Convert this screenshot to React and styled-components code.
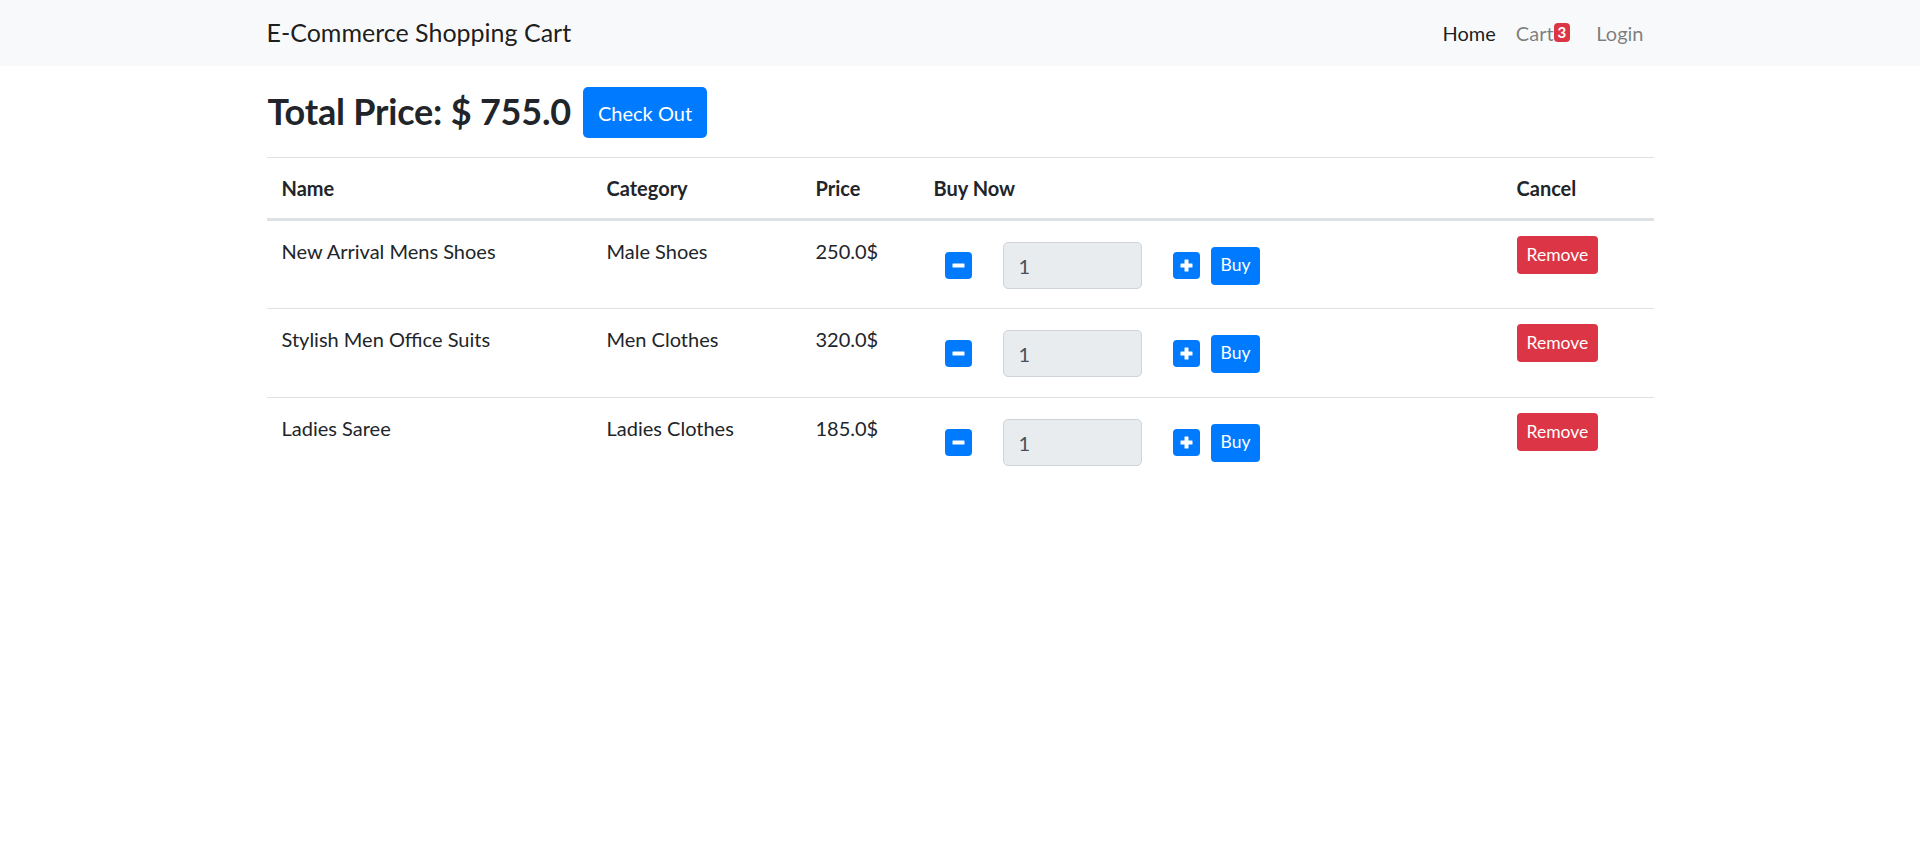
import React from "react";
import styled, { createGlobalStyle } from "styled-components";

const GlobalStyle = createGlobalStyle`
  body {
    margin: 0;
    background: #fff;
    font-family: Lato, "Open Sans", sans-serif;
    font-size: 20px;
    line-height: 1.5;
    color: #212529;
  }
  * { box-sizing: border-box; }
`;

const Navbar = styled.nav`
  background-color: #f8f9fa;
  height: 66px;
`;

const Container = styled.div`
  width: 1387px;
  margin: 0 auto;
`;

const NavInner = styled(Container)`
  height: 100%;
  display: flex;
  align-items: center;
  justify-content: space-between;
`;

const Brand = styled.a`
  font-size: 25px;
  color: rgba(0, 0, 0, 0.9);
  text-decoration: none;
  line-height: 1.5;
`;

const NavLinks = styled.div`
  display: flex;
  align-items: center;
`;

const NavLink = styled.a`
  padding: 10px;
  color: ${(p) => (p.active ? "rgba(0, 0, 0, 0.9)" : "rgba(0, 0, 0, 0.5)")};
  text-decoration: none;
  display: flex;
  align-items: center;
`;

const Badge = styled.span`
  display: inline-block;
  background: #dc3545;
  color: #fff;
  font-size: 15px;
  font-weight: 700;
  line-height: 1;
  padding: 2px 4px;
  border-radius: 4px;
  margin-right: 6px;
  transform: translateY(-1px);
`;

const TotalRow = styled(Container)`
  display: flex;
  align-items: center;
  height: 91px;
`;

const Title = styled.h2`
  margin: 0 12px 0 1px;
  font-size: 36px;
  font-weight: 700;
  letter-spacing: -0.2px;
  line-height: 1.2;
`;

const Button = styled.button`
  border: none;
  color: #fff;
  background: ${(p) => (p.danger ? "#dc3545" : "#007bff")};
  font-family: inherit;
  font-size: ${(p) => (p.small ? "17.5px" : "20px")};
  line-height: 1.5;
  padding: ${(p) => (p.small ? "4px 10px" : "10px 15px")};
  height: ${(p) => (p.small ? "38px" : "51px")};
  border-radius: ${(p) => (p.small ? "4px" : "5px")};
  cursor: pointer;
`;

const CheckOut = styled(Button)`
  margin-top: 2px;
`;

const Table = styled.table`
  width: 1387px;
  border-collapse: collapse;
  table-layout: fixed;
`;

const Th = styled.th`
  text-align: left;
  font-weight: 700;
  padding: 15px;
  border-top: 1px solid #dee2e6;
  border-bottom: 3px solid #dee2e6;
  line-height: 1.5;
`;

const Td = styled.td`
  padding: 15px;
  border-top: 1px solid #dee2e6;
  vertical-align: top;
  line-height: 1.5;
  height: 89px;
`;

const BuyGroup = styled.div`
  display: flex;
  align-items: center;
  padding-top: 6px;
  padding-left: 11px;
`;

const IconButton = styled.span`
  display: inline-flex;
  width: 27px;
  height: 27px;
  cursor: pointer;
`;

const QtyInput = styled.input`
  width: 139px;
  height: 47px;
  margin: 0 31px;
  padding: 6px 15px;
  border: 1px solid #ced4da;
  border-radius: 5px;
  background: #e9ecef;
  color: #495057;
  font-family: inherit;
  font-size: 20px;
`;

const BuyButton = styled(Button)`
  margin-left: 11px;
`;

const SquareIcon = ({ plus }) => (
  <svg width="27" height="27" viewBox="0 0 27 27">
    <rect x="0" y="0" width="27" height="27" rx="4" fill="#007bff" />
    <rect x="7.5" y="11.5" width="12" height="4" rx="0.5" fill="#fff" />
    {plus && <rect x="11.5" y="7.5" width="4" height="12" rx="0.5" fill="#fff" />}
  </svg>
);

const items = [
  { name: "New Arrival Mens Shoes", category: "Male Shoes", price: "250.0$" },
  { name: "Stylish Men Office Suits", category: "Men Clothes", price: "320.0$" },
  { name: "Ladies Saree", category: "Ladies Clothes", price: "185.0$" },
];

export default function App() {
  return (
    <>
      <GlobalStyle />
      <Navbar>
        <NavInner>
          <Brand href="#">E-Commerce Shopping Cart</Brand>
          <NavLinks>
            <NavLink active href="#">Home</NavLink>
            <NavLink href="#">
              Cart<Badge>3</Badge>
            </NavLink>
            <NavLink href="#">Login</NavLink>
          </NavLinks>
        </NavInner>
      </Navbar>
      <TotalRow>
        <Title>Total Price: $ 755.0</Title>
        <CheckOut>Check Out</CheckOut>
      </TotalRow>
      <Container>
        <Table>
          <colgroup>
            <col style={{ width: 325 }} />
            <col style={{ width: 209 }} />
            <col style={{ width: 118 }} />
            <col style={{ width: 583 }} />
            <col style={{ width: 152 }} />
          </colgroup>
          <thead>
            <tr>
              <Th>Name</Th>
              <Th>Category</Th>
              <Th>Price</Th>
              <Th>Buy Now</Th>
              <Th>Cancel</Th>
            </tr>
          </thead>
          <tbody>
            {items.map((item) => (
              <tr key={item.name}>
                <Td>{item.name}</Td>
                <Td>{item.category}</Td>
                <Td>{item.price}</Td>
                <Td>
                  <BuyGroup>
                    <IconButton><SquareIcon /></IconButton>
                    <QtyInput readOnly value="1" />
                    <IconButton><SquareIcon plus /></IconButton>
                    <BuyButton small>Buy</BuyButton>
                  </BuyGroup>
                </Td>
                <Td>
                  <Button small danger>Remove</Button>
                </Td>
              </tr>
            ))}
          </tbody>
        </Table>
      </Container>
    </>
  );
}
